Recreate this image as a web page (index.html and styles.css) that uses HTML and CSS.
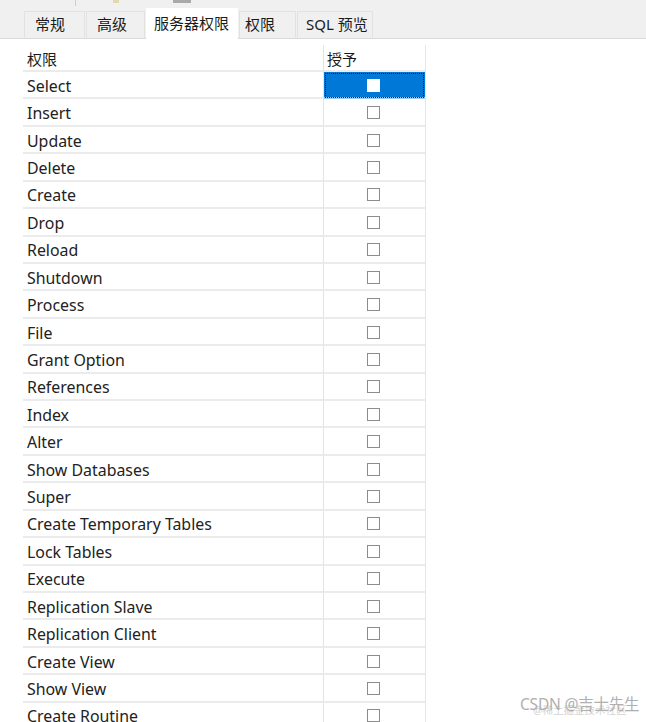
FILE: index.html
```html
<!DOCTYPE html>
<html lang="zh-CN">
<head>
<meta charset="utf-8">
<title>服务器权限</title>
<link rel="stylesheet" href="styles.css">
</head>
<body>
<div class="top">
  <div class="remnants">
    <span class="rem-sep"></span>
    <span class="rem-icon"></span>
    <span class="rem-box"></span>
  </div>
  <div class="tabs">
    <div class="tab t1">常规</div>
    <div class="tab t2">高级</div>
    <div class="tab active t3">服务器权限</div>
    <div class="tab t4">权限</div>
    <div class="tab t5">SQL 预览</div>
  </div>
</div>
<div class="panel">
  <div class="grid">
    <div class="cell head">权限</div><div class="cell head c2h">授予</div>
    <div class="cell name">Select</div><div class="cell chk sel"><span class="box"></span></div>
    <div class="cell name">Insert</div><div class="cell chk"><span class="box"></span></div>
    <div class="cell name">Update</div><div class="cell chk"><span class="box"></span></div>
    <div class="cell name">Delete</div><div class="cell chk"><span class="box"></span></div>
    <div class="cell name">Create</div><div class="cell chk"><span class="box"></span></div>
    <div class="cell name">Drop</div><div class="cell chk"><span class="box"></span></div>
    <div class="cell name">Reload</div><div class="cell chk"><span class="box"></span></div>
    <div class="cell name">Shutdown</div><div class="cell chk"><span class="box"></span></div>
    <div class="cell name">Process</div><div class="cell chk"><span class="box"></span></div>
    <div class="cell name">File</div><div class="cell chk"><span class="box"></span></div>
    <div class="cell name">Grant Option</div><div class="cell chk"><span class="box"></span></div>
    <div class="cell name">References</div><div class="cell chk"><span class="box"></span></div>
    <div class="cell name">Index</div><div class="cell chk"><span class="box"></span></div>
    <div class="cell name">Alter</div><div class="cell chk"><span class="box"></span></div>
    <div class="cell name">Show Databases</div><div class="cell chk"><span class="box"></span></div>
    <div class="cell name">Super</div><div class="cell chk"><span class="box"></span></div>
    <div class="cell name">Create Temporary Tables</div><div class="cell chk"><span class="box"></span></div>
    <div class="cell name">Lock Tables</div><div class="cell chk"><span class="box"></span></div>
    <div class="cell name">Execute</div><div class="cell chk"><span class="box"></span></div>
    <div class="cell name">Replication Slave</div><div class="cell chk"><span class="box"></span></div>
    <div class="cell name">Replication Client</div><div class="cell chk"><span class="box"></span></div>
    <div class="cell name">Create View</div><div class="cell chk"><span class="box"></span></div>
    <div class="cell name">Show View</div><div class="cell chk"><span class="box"></span></div>
    <div class="cell name">Create Routine</div><div class="cell chk"><span class="box"></span></div>
  </div>
</div>
<div class="watermark">
  <span class="wm-sub">@稀土掘金技术社区</span>
  <span class="wm-main">CSDN @吉士先生</span>
</div>
</body>
</html>
```

FILE: styles.css
```css
html, body {
  margin: 0;
  padding: 0;
  background: #ffffff;
  height: 722px;
  overflow: hidden;
}
body {
  font-family: "Noto Sans", "Noto Sans CJK SC", sans-serif;
  font-size: 15px;
  color: #1a1a1a;
  position: relative;
}
.top {
  height: 38px;
  background: #f0f0f0;
  border-bottom: 1px solid #dadada;
  display: flex;
  flex-direction: column;
  justify-content: space-between;
}
.remnants {
  height: 6px;
  display: flex;
  align-items: flex-start;
}
.rem-sep {
  width: 1px;
  height: 6px;
  background: #cfcfcf;
  margin-left: 75px;
}
.rem-icon {
  width: 6px;
  height: 3px;
  background: #e2d8b0;
  margin-left: 37px;
}
.rem-box {
  width: 18px;
  height: 3px;
  background: #a9a9a9;
  margin-left: 54px;
}
.tabs {
  display: flex;
  align-items: flex-end;
  padding-left: 24px;
  height: 30px;
}
.tab {
  height: 27px;
  box-sizing: border-box;
  border: 1px solid #e2e2e2;
  border-bottom: none;
  background: #f0f0f0;
  padding: 0 0 0 10px;
  line-height: 25px;
  font-size: 15px;
  color: #1a1a1a;
  margin-right: 1px;
  white-space: nowrap;
}
.t1 { width: 61px; }
.t2 { width: 59px; }
.t3 { width: 92px; padding-left: 7px; }
.t4 { width: 57px; padding-left: 5px; }
.t5 { width: 76px; padding-left: 8px; }
.tab.active {
  background: #ffffff;
  border-color: #ffffff;
  line-height: 28px;
  margin-bottom: -1px;
  height: 31px;
}
.panel {
  padding: 6px 0 0 23px;
}
.grid {
  display: grid;
  grid-template-columns: 301px 101px;
  grid-template-rows: 27px;
  grid-auto-rows: 27.43px;
  width: 402px;
  border-right: 1px solid #e6e6e6;
  box-sizing: content-box;
}
.cell {
  box-sizing: border-box;
  border-bottom: 2px solid #ebebeb;
  display: flex;
  align-items: center;
  white-space: nowrap;
}
.name {
  font-size: 15.9px;
  padding-top: 2px;
  color: #222;
}
.name, .head {
  padding-left: 4px;
  border-right: 1px solid #e3e3e3;
}
.c2h {
  border-right: none;
  padding-left: 3px;
}
.head {
  font-size: 15px;
  padding-top: 1px;
}
.chk {
  justify-content: center;
}
.box {
  width: 13px;
  height: 13px;
  box-sizing: border-box;
  border: 1px solid #8c8c8c;
  background: #ffffff;
  margin-left: -2px;
  margin-top: 1px;
}
.chk.sel {
  background: #0078d7;
  outline: 1px dotted #1c1c1c;
  outline-offset: -2px;
  border-bottom: 2px solid #9dc8ee;
}
.chk.sel .box {
  border-color: #ffffff;
}
.watermark {
  position: absolute;
  left: 520px;
  top: 692px;
  width: 120px;
  height: 28px;
}
.wm-main {
  position: absolute;
  left: 0;
  top: 0;
  font-size: 15.5px;
  color: #b0b0b0;
  white-space: nowrap;
  letter-spacing: -0.2px;
}
.wm-sub {
  position: absolute;
  left: 13px;
  top: 10px;
  font-size: 10.5px;
  color: #d2d2d2;
  white-space: nowrap;
}
```
